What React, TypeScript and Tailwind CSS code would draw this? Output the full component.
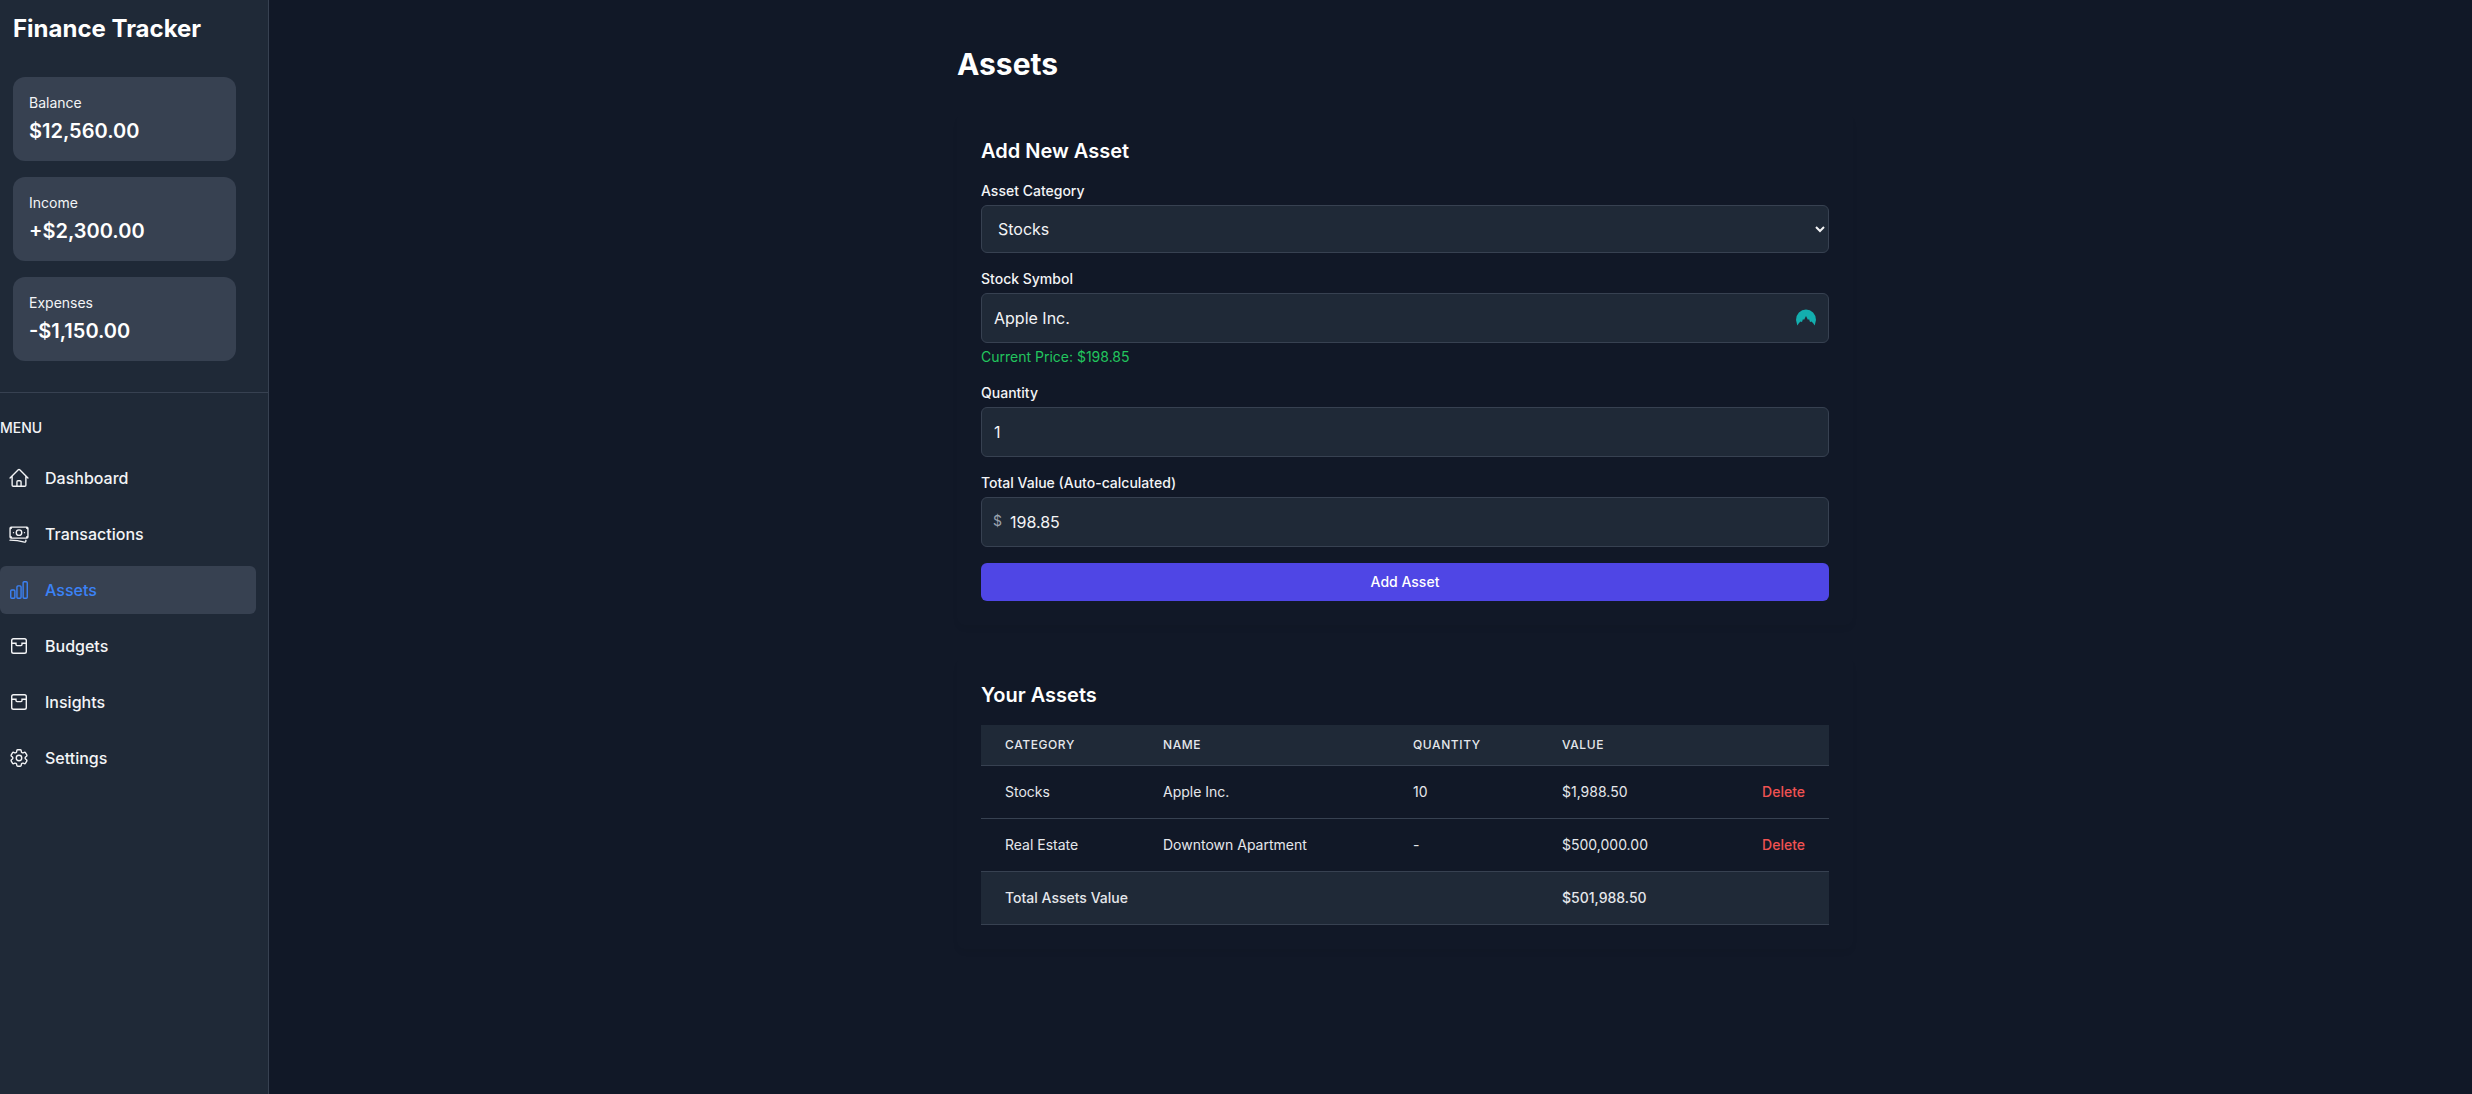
import {
  HiOutlineBanknotes,
  HiOutlineChartBar,
  HiOutlineCog6Tooth,
  HiOutlineHome,
} from "react-icons/hi2";

const TrayIcon = ({ className }: { className?: string }) => (
  <svg className={className} viewBox="0 0 22 22" fill="none" stroke="currentColor" strokeWidth={1.4}>
    <rect x="3.7" y="3.7" width="14.6" height="14.6" rx="1.8" />
    <path d="M3.7 8.2H8V9.6C8 10.2 8.4 10.6 9 10.6H13C13.6 10.6 14 10.2 14 9.6V8.2H18.3" />
  </svg>
);

const stats = [
  { label: "Balance", value: "$12,560.00" },
  { label: "Income", value: "+$2,300.00" },
  { label: "Expenses", value: "-$1,150.00" },
];

const nav = [
  { label: "Dashboard", icon: HiOutlineHome },
  { label: "Transactions", icon: HiOutlineBanknotes },
  { label: "Assets", icon: HiOutlineChartBar, active: true },
  { label: "Budgets", icon: TrayIcon },
  { label: "Insights", icon: TrayIcon },
  { label: "Settings", icon: HiOutlineCog6Tooth },
];

const rows = [
  { category: "Stocks", name: "Apple Inc.", quantity: "10", value: "$1,988.50" },
  { category: "Real Estate", name: "Downtown Apartment", quantity: "-", value: "$500,000.00" },
];

const inputClass =
  "w-full h-[50px] bg-[#1f2937] border border-[#374151] rounded-md px-3 text-base text-[#f3f4f6]";

const Sidebar = () => (
  <aside className="w-[269px] shrink-0 min-h-screen bg-[#1f2937] border-r border-[#374151]">
    <h1 className="pl-[13px] pt-[13px] text-2xl font-bold leading-8 text-white">Finance Tracker</h1>
    <div className="pl-[13px] pr-[32px] pt-[32px] pb-[31px] flex flex-col gap-4 border-b border-[#374151]">
      {stats.map((s) => (
        <div key={s.label} className="h-[84px] rounded-xl bg-[#374151] px-4 py-3">
          <p className="text-sm leading-5 mt-[4px] mb-1 text-[#f3f4f6]">{s.label}</p>
          <p className="text-xl leading-7 font-semibold text-white">{s.value}</p>
        </div>
      ))}
    </div>
    <p className="mt-[25px] text-sm leading-5 font-medium text-[#f3f4f6]">MENU</p>
    <nav className="mt-4 pr-[12px] flex flex-col gap-2">
      {nav.map((item) => {
        const Icon = item.icon;
        return (
          <a
            key={item.label}
            className={`h-12 pl-[8px] flex items-center gap-[15px] rounded-md font-medium text-base ${
              item.active ? "bg-[#374151] text-[#3b82f6]" : "text-[#f3f4f6]"
            }`}
          >
            <Icon className="w-[22px] h-[22px] shrink-0" />
            {item.label}
          </a>
        );
      })}
    </nav>
  </aside>
);

const Field = ({ label, children }: { label: string; children: React.ReactNode }) => (
  <div>
    <label className="block text-sm leading-5 font-medium text-[#f3f4f6] mb-1">{label}</label>
    {children}
  </div>
);

const AddAssetCard = () => (
  <section className="mt-[31px] p-6 rounded-lg shadow-[0_4px_6px_-1px_rgba(0,0,0,0.05)]">
    <h3 className="text-xl leading-7 font-semibold text-white">Add New Asset</h3>
    <div className="mt-4 flex flex-col gap-4">
      <Field label="Asset Category">
        <select className="w-full h-12 bg-[#1f2937] border border-[#374151] rounded-md px-3 text-base text-[#f3f4f6]">
          <option>Stocks</option>
        </select>
      </Field>
      <div>
        <Field label="Stock Symbol">
          <div className="relative">
            <input className={inputClass} defaultValue="Apple Inc." readOnly />
            <svg className="absolute right-[13px] top-[15px] w-5 h-5" viewBox="0 0 20 20">
              <path
                d="M0 12A10 10.5 0 0 1 20 12L18.7 17.5L17 15L15.5 13.5L14 14L13 11L12 12L10 8L8 12L7 11L6 14L4.5 13.5L3 15L1.3 17.5Z"
                fill="#13aeae"
              />
            </svg>
          </div>
        </Field>
        <p className="mt-1 text-sm leading-5 text-[#22c55e]">Current Price: $198.85</p>
      </div>
      <Field label="Quantity">
        <input className={inputClass} defaultValue="1" readOnly />
      </Field>
      <Field label="Total Value (Auto-calculated)">
        <div className="relative">
          <span className="absolute left-[12px] top-[14px] text-sm leading-5 text-[#9ca3af]">$</span>
          <input className={`${inputClass} pl-7`} defaultValue="198.85" readOnly />
        </div>
      </Field>
      <button className="h-[38px] rounded-md bg-[#4f46e5] text-sm font-medium text-white">Add Asset</button>
    </div>
  </section>
);

const AssetsTable = () => (
  <section className="mt-8 p-6 rounded-lg shadow-[0_4px_6px_-1px_rgba(0,0,0,0.05)]">
    <h3 className="text-xl leading-7 font-semibold text-white">Your Assets</h3>
    <table className="mt-4 w-full table-fixed text-sm text-[#e5e7eb]">
      <thead className="bg-[#1f2937] border-b border-[#374151]">
        <tr className="text-left text-xs uppercase tracking-wider">
          <th className="h-10 pl-6 w-[182px] font-medium">Category</th>
          <th className="h-10 w-[250px] font-medium">Name</th>
          <th className="h-10 w-[149px] font-medium">Quantity</th>
          <th className="h-10 font-medium">Value</th>
          <th className="h-10 w-[100px]"></th>
        </tr>
      </thead>
      <tbody>
        {rows.map((r) => (
          <tr key={r.category} className="h-[53px] border-b border-[#374151]">
            <td className="pl-6">{r.category}</td>
            <td>{r.name}</td>
            <td>{r.quantity}</td>
            <td>{r.value}</td>
            <td className="pr-6 text-right font-medium text-[#f05252]">Delete</td>
          </tr>
        ))}
        <tr className="h-[53px] bg-[#1f2937] border-b border-[#374151] font-medium">
          <td className="pl-6 whitespace-nowrap">Total Assets Value</td>
          <td></td>
          <td></td>
          <td>$501,988.50</td>
          <td></td>
        </tr>
      </tbody>
    </table>
  </section>
);

export default function App() {
  return (
    <div className="flex min-h-screen bg-[#111827] font-['Inter',sans-serif]">
      <Sidebar />
      <main className="flex-1 pl-[69px]">
        <div className="w-[896px] mx-auto pt-[46px]">
          <h2 className="text-3xl leading-9 font-bold text-white">Assets</h2>
          <AddAssetCard />
          <AssetsTable />
        </div>
      </main>
    </div>
  );
}
